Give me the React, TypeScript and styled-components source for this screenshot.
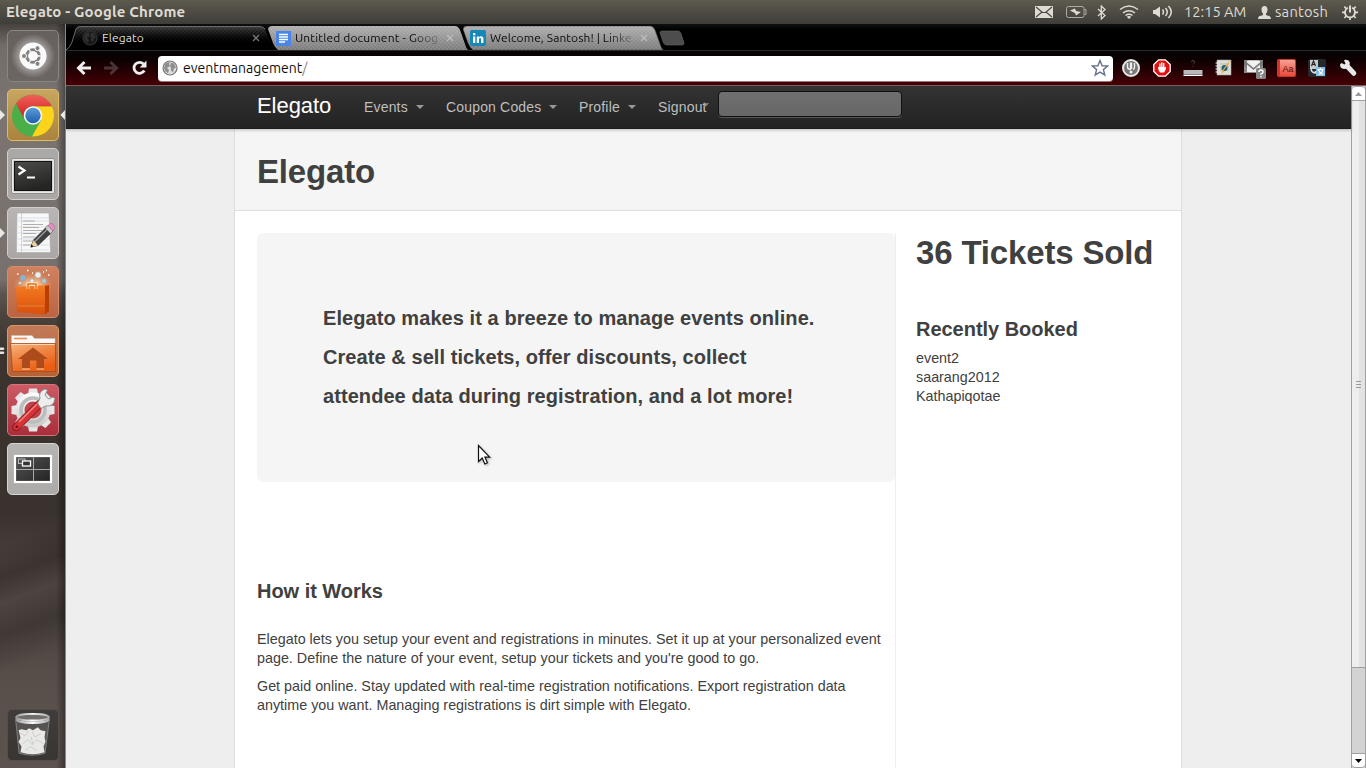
import React from "react";
import styled, { createGlobalStyle, css } from "styled-components";

const sans = `"Liberation Sans", Arial, sans-serif`;
const ui = `Ubuntu, "Noto Sans", "Open Sans", sans-serif`;

const GlobalStyle = createGlobalStyle`
  * { box-sizing: border-box; }
  body { margin: 0; overflow: hidden; background: #eee; }
  h1, h2, h4, p, ul { margin: 0; padding: 0; }
  ul { list-style: none; }
  svg { display: block; flex: none; }
`;

const Desktop = styled.div`
  width: 1366px;
  height: 768px;
  display: flex;
  flex-direction: column;
  overflow: hidden;
  position: relative;
`;

/* ---------- top panel ---------- */
const Panel = styled.header`
  height: 24px;
  flex: none;
  display: flex;
  align-items: center;
  padding: 0 8px 0 6px;
  background: linear-gradient(#5d5a4e, #3e3d38);
  font-family: ${ui};
  color: #dfdbd2;
`;
const PanelTitle = styled.div`
  flex: 1;
  font-size: 15px;
  font-weight: 700;
  letter-spacing: 0.17px;
  line-height: 24px;
  white-space: nowrap;
`;
const Indicator = styled.div<{ $w: number; $gap: number }>`
  width: ${p => p.$w}px;
  margin-left: ${p => p.$gap}px;
`;
const PanelText = styled.span<{ $w: number; $gap: number; $spacing?: number }>`
  width: ${p => p.$w}px;
  margin-left: ${p => p.$gap}px;
  font-size: 14.67px;
  line-height: 24px;
  letter-spacing: ${p => p.$spacing ?? 0}px;
  white-space: nowrap;
`;

const Workspace = styled.div`
  flex: 1;
  display: flex;
  min-height: 0;
`;

/* ---------- launcher ---------- */
const Launcher = styled.nav`
  width: 66px;
  flex: none;
  display: flex;
  flex-direction: column;
  gap: 7px;
  padding: 6px 0 7px;
  border-right: 1px solid #8a8681;
  background:
    linear-gradient(90deg, transparent 56px, rgba(0, 0, 0, 0.35) 65px),
    linear-gradient(160deg, transparent 490px, rgba(25, 18, 15, 0.3) 520px, transparent 545px, rgba(25, 18, 15, 0.28) 575px, transparent 610px),
    linear-gradient(#48413e 0, #736c69 22px, #7b7470 80px, #77706c 255px, #5c544f 270px, #4a423c 292px, #3b332d 330px, #3a322d 440px, #3a322e 490px, #4b423e 540px, #4e4642 600px, #5a504b 670px, #5d534e 744px);
`;
const Slot = styled.div<{ $last?: boolean }>`
  display: flex;
  align-items: center;
  height: 52px;
  margin-top: ${p => (p.$last ? "auto" : 0)};
`;
const Mark = styled.div<{ $right?: boolean }>`
  width: ${p => (p.$right ? 6 : 7)}px;
  flex: none;
`;
const Tile = styled.div<{ $top: string; $bottom: string; $edge: string }>`
  width: 52px;
  height: 52px;
  flex: none;
  border-radius: 5px;
  border: 1px solid ${p => p.$edge};
  background: linear-gradient(${p => p.$top}, ${p => p.$bottom});
  display: flex;
  align-items: center;
  justify-content: center;
`;

/* ---------- browser chrome ---------- */
const Browser = styled.main`
  flex: 1;
  min-width: 0;
  display: flex;
  flex-direction: column;
`;
const TabStrip = styled.div`
  height: 26px;
  flex: none;
  display: flex;
  padding-top: 2px;
  background: linear-gradient(#0e1110, #000 6px);
`;
const TabBox = styled.div<{ $w: number; $pad: number; $active?: boolean }>`
  position: relative;
  width: ${p => p.$w}px;
  height: 24px;
  flex: none;
  display: flex;
  align-items: center;
  padding-left: ${p => p.$pad}px;
  font: 12px ${ui};
  color: ${p => (p.$active ? "#ddd" : "#0a0a0a")};
`;
const TabShape = styled.svg`
  position: absolute;
  left: 0;
  top: 0;
`;
const TabLabel = styled.span<{ $w: number; $spacing: number; $fade?: boolean }>`
  position: relative;
  width: ${p => p.$w}px;
  margin-left: 4px;
  margin-right: 8px;
  overflow: hidden;
  white-space: nowrap;
  line-height: 22px;
  padding-bottom: 1px;
  letter-spacing: ${p => p.$spacing}px;
  ${p => p.$fade && css`mask-image: linear-gradient(90deg, #000 82%, rgba(0, 0, 0, 0.2));`}
`;
const TabIcon = styled.div`
  position: relative;
  flex: none;
`;
const Toolbar = styled.div`
  height: 36px;
  flex: none;
  display: flex;
  align-items: center;
  padding-left: 9px;
  border-top: 1px solid #2c2c2c;
  border-bottom: 1px solid #7c6263;
  background: linear-gradient(#050505 0, #0b0001 8px, #2a0003 22px, #480006 34px);
`;
const NavButton = styled.div<{ $dim?: boolean }>`
  width: 28px;
  height: 34px;
  padding: 0 6px 0 0;
  flex: none;
  display: flex;
  align-items: center;
  opacity: ${p => (p.$dim ? 0.25 : 1)};
`;
const Omnibox = styled.div`
  width: 955px;
  height: 25px;
  margin: 0 2px 0 -1px;
  flex: none;
  display: flex;
  align-items: center;
  justify-content: space-between;
  padding: 0 4px;
  border-radius: 4px;
  background: #fff;
  box-shadow: 0 1px 0 #a07578;
`;
const Address = styled.div`
  display: flex;
  align-items: center;
  gap: 5px;
  font: 14px ${ui};
  line-height: 24px;
  color: #111;
`;
const Slash = styled.span`
  color: #888;
  margin-left: -5px;
`;
const Extension = styled.div`
  width: 31.1px;
  flex: none;
  display: flex;
  justify-content: center;
`;

/* ---------- page ---------- */
const Viewport = styled.div`
  flex: 1;
  min-height: 0;
  display: flex;
`;
const Page = styled.div`
  flex: 1;
  display: flex;
  flex-direction: column;
  background: #eee;
  font-family: ${sans};
  color: #404040;
`;
const NavBar = styled.div`
  height: 43px;
  flex: none;
  display: flex;
  padding-left: 191px;
  background: linear-gradient(#333, #222);
  box-shadow: 0 1px 3px rgba(0, 0, 0, 0.25), inset 0 -1px 0 rgba(0, 0, 0, 0.15);
  position: relative;
  color: #bfbfbf;
`;
const Brand = styled.a`
  width: 107px;
  font-size: 22px;
  line-height: 39px;
  letter-spacing: -0.05px;
  color: #fff;
`;
const NavItem = styled.a<{ $w: number }>`
  width: ${p => p.$w}px;
  display: flex;
  align-items: center;
  justify-content: space-between;
  margin-right: 22px;
  font-size: 14px;
  letter-spacing: 0.17px;
  line-height: 42px;
  height: 42px;
  white-space: nowrap;
`;
const Caret = styled.i<{ $tucked?: boolean }>`
  border: 4px solid transparent;
  border-top-color: #999;
  border-bottom: 0;
  ${p => p.$tucked && css`margin-left: -5px; margin-top: -4px; border-width: 4px 3px 0; opacity: 0.7;`}
`;
const SearchBox = styled.input`
  width: 184px;
  height: 26px;
  margin: 5px 0 0 -13px;
  padding: 0;
  border: 1px solid #111;
  border-radius: 4px;
  background: linear-gradient(#707070, #666);
  box-shadow: 0 1px 0 #555;
  outline: 0;
`;
const Content = styled.div`
  width: 948px;
  flex: 1;
  margin-left: 168px;
  display: flex;
  flex-direction: column;
  border: solid #ddd;
  border-width: 0 1px;
  background: #fff;
`;
const PageHeader = styled.div`
  height: 82px;
  padding: 23px 22px 0;
  background: #f5f5f5;
  border-bottom: 1px solid #ddd;
`;
const Title = styled.h1`
  font-size: 33px;
  line-height: 40px;
  letter-spacing: -0.16px;
  white-space: nowrap;
`;
const Columns = styled.div`
  flex: 1;
  display: flex;
  padding: 22px 0 0 22px;
`;
const MainColumn = styled.div`
  width: 639px;
  border-right: 1px solid #eee;
`;
const SideColumn = styled.aside`
  padding-left: 20px;
  font-size: 14.33px;
  line-height: 19px;
`;
const Hero = styled.div`
  width: 638px;
  height: 249px;
  padding: 66px 0 0 66px;
  border-radius: 6px;
  background: #f5f5f5;
`;
const HeroLine = styled.p`
  font-size: 20px;
  font-weight: 700;
  line-height: 39px;
  letter-spacing: 0.07px;
  white-space: nowrap;
`;
const Heading = styled.h4<{ $top: number; $bottom: number }>`
  font-size: 20px;
  line-height: 24px;
  letter-spacing: -0.03px;
  margin: ${p => p.$top}px 0 ${p => p.$bottom}px;
`;
const Paragraph = styled.p`
  font-size: 14.33px;
  line-height: 19px;
  margin-bottom: 9px;
  white-space: nowrap;
`;

/* ---------- scrollbar ---------- */
const ScrollBar = styled.div`
  width: 15px;
  flex: none;
  display: flex;
  flex-direction: column;
  border: solid #a0a0a0;
  border-width: 0 1px;
  background: #d3d3d3;
`;
const ScrollButton = styled.div<{ $end?: boolean }>`
  height: 15px;
  display: flex;
  align-items: center;
  justify-content: center;
  background: #fff;
  border: solid #a0a0a0;
  border-width: 1px 0;
  border-radius: ${p => (p.$end ? "0 0 4px 4px" : "4px 4px 0 0")};
`;
const Thumb = styled.div`
  height: 567px;
  display: flex;
  flex-direction: column;
  align-items: center;
  justify-content: center;
  gap: 2px;
  border-bottom: 1px solid #a0a0a0;
  background: linear-gradient(90deg, #eee 7px, #e2e2e2 7px);
`;
const Grip = styled.i`
  width: 5px;
  height: 1px;
  background: #999;
`;
const Trough = styled.div`
  flex: 1;
`;

const Pointer = styled.svg`
  position: absolute;
  left: 477px;
  top: 444px;
  filter: drop-shadow(1px 1px 1px rgba(0, 0, 0, 0.3));
`;

/* ---------- drawings ---------- */
const LeftPip = () => (
  <svg width="6" height="12" viewBox="0 0 6 12"><path d="M0 1 5 6 0 11Z" fill="#e8e8e8" /></svg>
);
const RightPip = () => (
  <svg width="6" height="12" viewBox="0 0 6 12"><path d="M6 1 1.500 6 6 11Z" fill="#eee" /></svg>
);
const PairPip = () => (
  <svg width="6" height="12" viewBox="0 0 6 12"><path d="M0 2.500h3.500l1 1-1 1.500H0zM0 6.500h3.500l1 1.200-1 1.300H0z" fill="#e4e4e4" /></svg>
);

const UbuntuLogo = () => (
  <svg width="50" height="50" viewBox="0 0 50 50">
    <defs><radialGradient id="halo"><stop offset=".5" stopColor="#fff" stopOpacity=".45" /><stop offset="1" stopColor="#fff" stopOpacity="0" /></radialGradient></defs>
    <circle cx="25" cy="25" r="22" fill="url(#halo)" />
    <circle cx="25" cy="25" r="13.500" fill="#fafafa" />
    <circle cx="25" cy="25" r="6.300" fill="none" stroke="#858180" strokeWidth="3" />
    <g stroke="#fafafa" strokeWidth="1.300"><path d="M25 25h10M25 25l-5-8.700M25 25l-5 8.700" /></g>
    <circle cx="25" cy="25" r="4.600" fill="#fafafa" />
    <g fill="#858180" stroke="#fafafa" strokeWidth="1"><circle cx="16" cy="25" r="2.500" /><circle cx="29.500" cy="17.200" r="2.500" /><circle cx="29.500" cy="32.800" r="2.500" /></g>
  </svg>
);
const ChromeLogo = () => (
  <svg width="50" height="50" viewBox="0 0 50 50">
    <defs>
      <linearGradient id="cr" x2="0" y2="1"><stop stopColor="#f0605a" /><stop offset="1" stopColor="#d01f1f" /></linearGradient>
      <linearGradient id="cb" x2="0" y2="1"><stop stopColor="#5b9bd8" /><stop offset="1" stopColor="#1f5fae" /></linearGradient>
    </defs>
    <circle cx="25" cy="25.500" r="21" fill="#4aaf48" />
    <path d="M25 16.200h18.800A21 21 0 0 1 24 46.500L33.300 30Z" fill="#fdd31b" />
    <path d="M8 13.500A21 21 0 0 1 43.900 16.200H25a9.500 9.500 0 0 0-9 12.300Z" fill="url(#cr)" />
    <circle cx="25" cy="25.500" r="9.300" fill="#f2f6f8" />
    <circle cx="25" cy="25.500" r="7.700" fill="url(#cb)" />
  </svg>
);
const TerminalIcon = () => (
  <svg width="50" height="50" viewBox="0 0 50 50">
    <defs><linearGradient id="term" x2="0.300" y2="1"><stop stopColor="#4c4c4a" /><stop offset="1" stopColor="#252524" /></linearGradient></defs>
    <rect x="3.500" y="9.500" width="43" height="35" rx="1.500" fill="#e9e9e9" stroke="#8f8f8f" />
    <rect x="5.500" y="11.500" width="39" height="31" fill="#bbb" />
    <rect x="6.500" y="12.500" width="37" height="29" fill="url(#term)" stroke="#111" />
    <path d="m10.500 17.500 6 4-6 4" fill="none" stroke="#fff" strokeWidth="2.200" />
    <path d="M19 28.500h8" stroke="#fff" strokeWidth="2" />
  </svg>
);
const EditorIcon = () => (
  <svg width="50" height="50" viewBox="0 0 50 50">
    <path d="M9 5h32l1.500 39.500H8.500Z" fill="#f8f8f6" stroke="#aaa" strokeWidth=".6" />
    <path d="M10 10h31M10 13h31M10 19h31M10 25h31M10 31h31M10 37h31M10 42h31" stroke="#ccd8ec" strokeWidth=".7" />
    <path d="M13.500 5v39" stroke="#f0b8c0" strokeWidth=".8" />
    <path d="M15 13h12M15 16.500h20M15 19.500h16M15 22.500h19M15 25.500h13M15 29h12M15 33h11M15 37h9" stroke="#a6a6a6" strokeWidth=".9" />
    <path d="m23 39 2.500-7L40 17.500l5 5.500-15 14.500Z" fill="#3d3f41" stroke="#222" strokeWidth=".7" />
    <path d="m27 33.500 14-14" stroke="#9a9da0" strokeWidth="1.500" />
    <path d="m37.500 20 2.500-2.500 5 5.500-2.500 2.500Z" fill="#ccc" />
    <path d="m40 17.500 2-1.800q1.500-1 3.500 1t1 4L45 23Z" fill="#e58fc0" stroke="#9c6486" strokeWidth=".5" />
    <path d="m23 39 2.500-7 4.500 5.500Z" fill="#ead39b" /><path d="m22.500 39.500 1-3 2 2Z" fill="#111" />
  </svg>
);
const SoftwareIcon = () => (
  <svg width="50" height="50" viewBox="0 0 50 50">
    <defs><linearGradient id="bag" x2="0" y2="1"><stop stopColor="#f47c21" /><stop offset="1" stopColor="#d94f0b" /></linearGradient>
      <radialGradient id="burst"><stop stopColor="#fff6c0" /><stop offset="1" stopColor="#f6b070" stopOpacity="0" /></radialGradient></defs>
    <ellipse cx="25" cy="18" rx="20" ry="12" fill="url(#burst)" />
    <g fill="#f2ece6" stroke="#a8a09c" strokeWidth=".8"><circle cx="15" cy="11" r="3" fill="#86b5d6" /><circle cx="30" cy="8" r="3.200" /><circle cx="24" cy="14" r="2.300" /><circle cx="36" cy="14" r="2.500" fill="#b9c8d0" /><circle cx="12" cy="16" r="1.500" /></g>
    <path d="M19 3.500h1.500M24 6h1M40 8h1.500M38 3.500h1M9 7h1.500M35 5h1" stroke="#fff" strokeWidth="1.500" />
    <path d="M8 20 41 18v26l-4 3.500L9 45Z" fill="url(#bag)" />
    <path d="m37 19 4-1v26l-4 3.500Z" fill="#b93f05" />
    <path d="M20 22v-5h8v5" fill="none" stroke="#fff3dd" strokeWidth="2.800" /><path d="M20 22v-5h8v5" fill="none" stroke="#e96a12" strokeWidth="1.500" />
    <path d="M10 39h26" stroke="#e98a50" strokeWidth=".8" />
  </svg>
);
const FilesIcon = () => (
  <svg width="50" height="50" viewBox="0 0 50 50">
    <defs><linearGradient id="fold" x2=".5" y2="1"><stop stopColor="#f6b680" /><stop offset=".5" stopColor="#f08544" /><stop offset="1" stopColor="#ea5e12" /></linearGradient></defs>
    <path d="M3.500 20V9.500h20.500l2.500 3H47V20Z" fill="#fafafa" stroke="#c8c0b8" strokeWidth=".6" />
    <path d="M6 12.500h13" stroke="#f08a4e" strokeWidth="1.600" />
    <path d="M2.500 17.500h45v28h-43Z" fill="url(#fold)" stroke="#a8481b" strokeWidth=".8" />
    <path d="M3.500 18.500h43" stroke="#fbd5b0" />
    <path d="M25 21.500 40 33h-4v9.500H28.500v-8h-6.500v8h-8V33h-4Z" fill="#ad4b1b" />
    <path d="M14 43h8M28.500 43H36" stroke="#ffd7a8" />
  </svg>
);
const SettingsIcon = () => (
  <svg width="50" height="50" viewBox="0 0 50 50">
    <defs><linearGradient id="gear" x2="0" y2="1"><stop stopColor="#fff" /><stop offset="1" stopColor="#c8c8c8" /></linearGradient></defs>
    <g fill="#e6e6e6">
      {[0, 45, 90, 135].map(a => <path key={a} transform={`rotate(${a} 25 25)`} d="M21 3.500h8l1.500 8v27l-1.500 8h-8l-1.500-8v-27Z" />)}
      <circle cx="25" cy="25" r="17.500" fill="url(#gear)" />
    </g>
    <circle cx="25" cy="25" r="12" fill="none" stroke="#bcbcbc" strokeWidth="3.500" />
    <circle cx="25" cy="25" r="8.500" fill="#c1434b" />
    <path d="M8.500 42 31 19.500" stroke="#7d1217" strokeWidth="8" strokeLinecap="round" />
    <path d="M8.500 42 31 19.500" stroke="#d93236" strokeWidth="6.500" strokeLinecap="round" />
    <path d="m11 37 18-18" stroke="#f28a84" strokeWidth="1.500" />
    <circle cx="8.800" cy="41.800" r="1.300" fill="#651015" />
    <path d="m29.500 18 2.500-4.500q-2-7 5-9.500l2.500 1-2.500 5 3.500 4 4.500-2 2 1.500q-1 8.500-9.500 7.500l-4.500 2.500Z" fill="#eee" stroke="#888" strokeWidth=".9" />
  </svg>
);
const WorkspacesIcon = () => (
  <svg width="50" height="50" viewBox="0 0 50 50">
    <defs><linearGradient id="ws" x2="1" y2="1"><stop stopColor="#565656" /><stop offset="1" stopColor="#222" /></linearGradient></defs>
    <rect x="7" y="12" width="36" height="26" fill="url(#ws)" stroke="#fff" strokeWidth="2.200" />
    <path d="M25.500 13v24M8 25.500h34" stroke="#a8a8a8" />
    <rect x="10.500" y="15" width="6.500" height="4.500" fill="none" stroke="#bbb" />
    <rect x="14.500" y="17" width="8" height="5" fill="#333" stroke="#fff" strokeWidth="1.300" />
  </svg>
);
const TrashIcon = () => (
  <svg width="50" height="50" viewBox="0 0 52 52">
    <defs><linearGradient id="rim"><stop stopColor="#999" /><stop offset=".5" stopColor="#fff" /><stop offset="1" stopColor="#aaa" /></linearGradient></defs>
    <path d="M8 10 11.500 45q14 4 27 0L43 10Z" fill="#5d5a58" fillOpacity=".8" stroke="#999" strokeWidth=".7" />
    <path d="m11 21 3-1 5 1 3-2 4 2 5-3 3 3 5 1-1 6 1 5-2 5 1 6q-12 4-25 0l1-6-3-5 2-4-1-4Z" fill="#e8e8e6" />
    <path d="m13 24 5 3 3-5M25 22l3 6 6-3M15 35l6-4 4 5 5-5 7 4M18 42l5-4 7 4M24 28l2 8" stroke="#cdcdcb" fill="none" />
    <ellipse cx="25.500" cy="7.500" rx="17" ry="3.500" fill="#716d6a" stroke="url(#rim)" strokeWidth="2" />
    <path d="M8 8q1 4 17.500 4T43 8v3q-2 3.500-17.500 3.500T8 11Z" fill="url(#rim)" />
  </svg>
);

const Globe = ({ dark }: { dark?: boolean }) => (
  <svg width="16" height="16" viewBox="0 0 16 16">
    <circle cx="8" cy="8" r="7" fill={dark ? "#151515" : "#dcdcdc"} stroke={dark ? "#343434" : "#777"} strokeWidth="1.200" />
    <path d="M3 4q2-2 5-2L7 4l1 2-3 2 2 2-1 3q-3-1-4-5ZM9 2.500l3 1 2 4-2 1-1 4-2-2V8L8 6Z" fill={dark ? "#2f2f2f" : "#8f8f8f"} />
  </svg>
);
const DocIcon = () => (
  <svg width="15" height="15" viewBox="0 0 15 15"><path fill="#4a86e8" d="M0 0h15v15H0z" /><path d="M3 3.500h9M3 6h9M3 8.500h9M3 11h6" stroke="#fff" strokeWidth="1.300" /></svg>
);
const LinkedInIcon = () => (
  <svg width="16" height="16" viewBox="0 0 16 16"><rect width="16" height="16" rx="2" fill="#1488b8" /><path d="M3 6.500h2.300V13H3zM3 3h2.300v2.200H3zM6.800 6.500H9v1q.7-1.200 2.100-1.200Q13.400 6.300 13.400 9v4h-2.300V9.400q0-1.300-1-1.300T9 9.400V13H6.800z" fill="#fff" /></svg>
);
const CloseX = ({ color }: { color: string }) => (
  <svg width="8" height="8" viewBox="0 0 8 8"><path d="m1 1 6 6M7 1 1 7" stroke={color} strokeWidth="1.300" /></svg>
);

const TabPattern = () => (
  <defs>
    <linearGradient id="tabOff" x2="0" y2="1"><stop stopColor="#b0b0b0" /><stop offset="1" stopColor="#7c7c7c" /></linearGradient>
    <linearGradient id="tabOn" x2="0" y2="1"><stop stopColor="#3a3a3a" /><stop offset=".55" stopColor="#111" /><stop offset="1" stopColor="#000" /></linearGradient>
    <linearGradient id="sink" x2="0" y2="1"><stop stopColor="#000" stopOpacity="0" /><stop offset=".7" stopColor="#000" /></linearGradient>
    <pattern id="weave" width="4" height="4" patternUnits="userSpaceOnUse"><path d="M0 0h2v2H0zM2 2h2v2H2z" fill="#fff" fillOpacity=".07" /></pattern>
  </defs>
);

const DictionaryTile = styled.div`
  width: 19px;
  height: 18px;
  padding: 3px 0 0 3px;
  border-radius: 2px;
  border: 1px solid #d3352a;
  border-left-width: 3px;
  background: linear-gradient(#f7a194, #e8493c);
  color: #55100c;
  font: 9px/13px ${sans};
`;
const Extensions = () => (
  <>
    <Extension><svg width="20" height="20" viewBox="0 0 20 20"><circle cx="10" cy="10" r="8" fill="#777" stroke="#e8e8e8" strokeWidth="2" /><path d="M6.500 5v4q0 2.500 3.500 2.500M13.500 5v4q0 2-1.500 2.500" stroke="#eee" strokeWidth="1.400" fill="none" /><path d="M10 4.500V11" stroke="#eee" strokeWidth="2.400" /><circle cx="10" cy="14" r="1.500" fill="#eee" /></svg></Extension>
    <Extension><svg width="18" height="18" viewBox="0 0 18 18"><path d="M5.600.8h6.800l4.800 4.800v6.800l-4.800 4.800H5.600L.8 12.400V5.600Z" fill="#e01010" stroke="#fff" strokeWidth="1.300" /><path d="M5 8h1.300V4.500h1.300V8h.6V3.300h1.300V8h.6V4h1.300v4.500l1.600-1v2.500L11 13.500H7Q5 12 5 8Z" fill="#fff" /></svg></Extension>
    <Extension><svg width="20" height="20" viewBox="0 0 20 20"><path d="M8.500 4q0-1.500 1.500-1.500T11.500 4 10 6.500M10 8v1" stroke="#444" fill="none" /><path d="M.5 12h19v4H.5z" fill="#b9b9bd" /><path d="M.5 16.500h19v1.500H.5z" fill="#fff" /></svg></Extension>
    <Extension><svg width="18" height="18" viewBox="0 0 18 18"><path d="M2 1h14v15H2z" fill="#deded6" stroke="#aaa" strokeWidth=".6" /><path d="M.5 4h3M.5 7h3M.5 10h3M.5 13h3" stroke="#eee" strokeWidth="1" /><path d="M5 5h9M5 8h9M5 11h9" stroke="#aaa" strokeWidth=".7" /><path d="m15 1-5 7-4 8 6-7Z" fill="#e8a62c" /><circle cx="9.500" cy="9" r="3" fill="#215d78" /><path d="m7 13 7-10" stroke="#f3b83f" strokeWidth="1.200" /></svg></Extension>
    <Extension><svg width="22" height="22" viewBox="0 0 22 22"><path d="M0 3h19v13H0z" fill="#8b8b8b" /><path d="M3 4h13v11H3z" fill="#eee" /><path d="m0 3 9.500 8L19 3v5l-3 2.500V7.500L9.500 13 3 7.500v3L0 8Z" fill="#777" /><path d="m3.500 3.500 6 5 6-5Z" fill="#f4f4f4" /><rect x="12" y="11" width="10" height="11" rx="1.500" fill="#858585" /><path d="M15 15q0-2 2-2t2 1.800-2 2.200v.8M17 19v1.300" stroke="#fff" strokeWidth="1.500" fill="none" /></svg></Extension>
    <Extension><DictionaryTile>Aa</DictionaryTile></Extension>
    <Extension><svg width="18" height="18" viewBox="0 0 18 18"><rect width="18" height="18" rx="2" fill="#24292c" /><path d="M2 1h8v9H2z" fill="#c9c9c9" /><path d="m3.500 7 2-5 2 5M4.500 5.500h2" stroke="#222" strokeWidth="1.200" fill="none" /><path d="M3 9q0 5 5 5l-1-2" stroke="#ddd" strokeWidth="1.500" fill="none" /><path d="M8 8h9v9H8z" fill="#84bce6" /><path d="M9.500 10.500h6M12.500 9v1.500M10.500 15.500q4-1 4-5M10.500 11q1 3 4.500 4.500" stroke="#fff" strokeWidth="1.100" fill="none" /></svg></Extension>
    <Extension><svg width="18" height="18" viewBox="0 0 18 18"><path d="M1 5.500 2.500 4l3 1.500 1-1L5 1.500 6 .8q4-.5 4.800 3.200l-.2 2L17 13q1 1.500-.5 3t-3 .5L7 9.800 5 10Q1 9.500 1 5.500Z" fill="#e8e8e8" /></svg></Extension>
  </>
);

const PanelIndicators = () => (
  <>
    <Indicator $w={18} $gap={0}><svg width="18" height="12" viewBox="0 0 18 12"><path d="M0 0h18v12H0z" fill="#dfdbd2" /><path d="m1 1 6.500 5.500h3L17 1M1 11l6-5M17 11l-6-5" stroke="#4a4942" strokeWidth="1.200" fill="none" /></svg></Indicator>
    <Indicator $w={21} $gap={13}><svg width="21" height="12" viewBox="0 0 21 12"><rect x=".5" y=".5" width="17.500" height="11" rx="2" fill="none" stroke="#aeaba2" /><path d="M18.500 3.500h1.500v5h-1.500" fill="none" stroke="#aeaba2" /><path d="m4 4.500 5-2 1 2.500 5 1-5 3.500L9 7Z" fill="#dfdbd2" /></svg></Indicator>
    <Indicator $w={9} $gap={10}><svg width="9" height="15" viewBox="0 0 9 15"><path d="m1 4 7 6.500-3.700 3.500V1L8 4.500 1 11" fill="none" stroke="#dfdbd2" strokeWidth="1.300" /></svg></Indicator>
    <Indicator $w={20} $gap={13}><svg width="20" height="14" viewBox="0 0 20 14"><path d="M1 4.500q9-7 18 0M4 8q6-4.500 12 0M6.500 10.500q3.500-2.500 7 0" fill="none" stroke="#dfdbd2" strokeWidth="1.500" /><path d="m10 14-2.300-2.300q2.300-1.500 4.600 0Z" fill="#dfdbd2" /></svg></Indicator>
    <Indicator $w={20} $gap={14}><svg width="20" height="14" viewBox="0 0 20 14"><path d="M0 5h2l5-3.500v11L2 9H0Z" fill="#dfdbd2" /><path d="M9.500 4.500q2 2.500 0 5M12.500 3q3.500 4 0 8M15.500 1q5.500 6 0 12" fill="none" stroke="#dfdbd2" strokeWidth="1.500" /></svg></Indicator>
    <PanelText $w={63} $gap={11}>12:15 AM</PanelText>
    <Indicator $w={13} $gap={11}><svg width="13" height="13" viewBox="0 0 13 13"><path d="M6.500 0q3 0 3 3.500T7.800 8q0 1.500 2.500 1.800T13 13H0q0-2.800 2.700-3.200T5.200 8Q3.500 7 3.500 3.500T6.500 0Z" fill="#dfdbd2" /></svg></Indicator>
    <PanelText $w={55} $gap={4} $spacing={0.25}>santosh</PanelText>
    <Indicator $w={16} $gap={12}><svg width="16" height="16" viewBox="0 0 16 16"><path d="M6 3.800a5 5 0 1 0 4 0" fill="none" stroke="#dfdbd2" strokeWidth="1.800" /><path d="M8 1.500V8.500" stroke="#dfdbd2" strokeWidth="2" /><path d="M0 8.300h3M13 8.300h3M2.300 2.600l2 2M13.700 2.600l-2 2M2.300 14l2-2M13.700 14l-2-2M8 13V16" stroke="#dfdbd2" strokeWidth="1.700" /></svg></Indicator>
  </>
);

type LauncherApp = { icon: React.ReactNode; top: string; bottom: string; edge: string; left?: React.ReactNode; right?: boolean; last?: boolean };
const apps: LauncherApp[] = [
  { icon: <UbuntuLogo />, top: "#67615e", bottom: "#6c6663", edge: "#8b8583" },
  { icon: <ChromeLogo />, top: "#c7a661", bottom: "#aa843d", edge: "#dfba68", left: <LeftPip />, right: true },
  { icon: <TerminalIcon />, top: "#aaa9a8", bottom: "#aaa7a5", edge: "#d2d0ce" },
  { icon: <EditorIcon />, top: "#b8b5b4", bottom: "#aaa6a5", edge: "#cfcccb", left: <LeftPip /> },
  { icon: <SoftwareIcon />, top: "#cf8260", bottom: "#b96543", edge: "#d88b68" },
  { icon: <FilesIcon />, top: "#c27b57", bottom: "#b56237", edge: "#dc9764", left: <PairPip /> },
  { icon: <SettingsIcon />, top: "#cb5b65", bottom: "#a92e3a", edge: "#d7737d" },
  { icon: <WorkspacesIcon />, top: "#b5b4b3", bottom: "#acabaa", edge: "#d6d5d4" },
  { icon: <TrashIcon />, top: "#403c3b", bottom: "#393533", edge: "#514d4b", last: true },
];

const activeTab = "M0 24Q4 22 6 16L10 3Q11 .5 14 .5H194Q197 .5 199 3L204 16Q206 22 209 24Z";
const idleTab = "M0 3Q1 0 4 0H187Q190 0 192 4L197 18Q198 22 200 24H10Q7 22 5 17Z";

export default function ElegatoDesktop() {
  return (
    <Desktop>
      <GlobalStyle />
      <Panel>
        <PanelTitle>Elegato - Google Chrome</PanelTitle>
        <PanelIndicators />
      </Panel>
      <Workspace>
        <Launcher>
          {apps.map((a, i) => (
            <Slot key={i} $last={a.last}>
              <Mark>{a.left}</Mark>
              <Tile $top={a.top} $bottom={a.bottom} $edge={a.edge}>{a.icon}</Tile>
              <Mark $right>{a.right && <RightPip />}</Mark>
            </Slot>
          ))}
        </Launcher>
        <Browser>
          <TabStrip>
            <TabBox $w={202} $pad={16} $active>
              <TabShape width="210" height="24"><TabPattern />
                <path d={activeTab} fill="url(#tabOn)" />
                <path d={activeTab} fill="url(#weave)" />
                <path d={activeTab} fill="url(#sink)" />
                <path d="M0 24Q4 22 6 16L10 3Q11 .5 14 .5H194Q197 .5 199 3" fill="none" stroke="#686868" />
              </TabShape>
              <TabIcon><Globe dark /></TabIcon>
              <TabLabel $w={142} $spacing={0.08}>Elegato</TabLabel>
              <TabIcon><CloseX color="#777" /></TabIcon>
            </TabBox>
            <TabBox $w={195} $pad={8}>
              <TabShape width="200" height="24">
                <path d={idleTab} fill="url(#tabOff)" />
                <path d={idleTab} fill="url(#weave)" />
              </TabShape>
              <TabIcon><DocIcon /></TabIcon>
              <TabLabel $w={143} $spacing={0.15} $fade>Untitled document - Goog</TabLabel>
              <TabIcon><CloseX color="#bdbdbd" /></TabIcon>
            </TabBox>
            <TabBox $w={196} $pad={7}>
              <TabShape width="200" height="24">
                <path d={idleTab} fill="url(#tabOff)" stroke="#4a4a4a" strokeWidth=".6" />
                <path d={idleTab} fill="url(#weave)" />
              </TabShape>
              <TabIcon><LinkedInIcon /></TabIcon>
              <TabLabel $w={142} $spacing={0.09} $fade>Welcome, Santosh! | Linke</TabLabel>
              <TabIcon><CloseX color="#bdbdbd" /></TabIcon>
            </TabBox>
            <svg width="26" height="24"><path d="M1 7Q1 5 3 5H19Q21 5 22 7.500L25 17Q25 19 23 19H8Q5.500 19 4.500 17Z" fill="#4d4d4d" stroke="#666" strokeWidth=".6" /></svg>
          </TabStrip>
          <Toolbar>
            <NavButton><svg width="18" height="18" viewBox="0 0 18 18"><path d="M16 9H4M9.500 3 3.500 9l6 6" stroke="#eee" strokeWidth="3" fill="none" /></svg></NavButton>
            <NavButton $dim><svg width="18" height="18" viewBox="0 0 18 18"><path d="M1 9h11M7.500 3l6 6-6 6" stroke="#ccc" strokeWidth="3" fill="none" /></svg></NavButton>
            <NavButton><svg width="18" height="18" viewBox="0 0 18 18"><path d="M13.300 11.500A5.500 5.500 0 1 1 12.500 5" stroke="#eee" strokeWidth="2.800" fill="none" /><path d="M15.500 1.500V8.500H8.700Z" fill="#eee" /></svg></NavButton>
            <Omnibox>
              <Address><Globe /><span>eventmanagement</span><Slash>/</Slash></Address>
              <svg width="18" height="18" viewBox="0 0 18 18"><path d="m9 1.500 2.100 5.200 5.600.3-4.300 3.600 1.400 5.500L9 13.100l-4.800 3 1.400-5.500L1.300 7l5.600-.3Z" fill="#fff" stroke="#66708a" strokeWidth="1.400" /></svg>
            </Omnibox>
            <Extensions />
          </Toolbar>
          <Viewport>
            <Page>
              <NavBar>
                <Brand>Elegato</Brand>
                <NavItem $w={60}>Events<Caret /></NavItem>
                <NavItem $w={111}>Coupon Codes<Caret /></NavItem>
                <NavItem $w={57}>Profile<Caret /></NavItem>
                <NavItem $w={51}>Signout<Caret $tucked /></NavItem>
                <SearchBox aria-label="Search" />
              </NavBar>
              <Content>
                <PageHeader><Title>Elegato</Title></PageHeader>
                <Columns>
                  <MainColumn>
                    <Hero>
                      <HeroLine>Elegato makes it a breeze to manage events online.</HeroLine>
                      <HeroLine>Create &amp; sell tickets, offer discounts, collect</HeroLine>
                      <HeroLine>attendee data during registration, and a lot more!</HeroLine>
                    </Hero>
                    <Heading $top={97} $bottom={27}>How it Works</Heading>
                    <Paragraph>Elegato lets you setup your event and registrations in minutes. Set it up at your personalized event<br />page. Define the nature of your event, setup your tickets and you're good to go.</Paragraph>
                    <Paragraph>Get paid online. Stay updated with real-time registration notifications. Export registration data<br />anytime you want. Managing registrations is dirt simple with Elegato.</Paragraph>
                  </MainColumn>
                  <SideColumn>
                    <Title>36 Tickets Sold</Title>
                    <Heading $top={44} $bottom={8}>Recently Booked</Heading>
                    <ul><li>event2</li><li>saarang2012</li><li>Kathapiqotae</li></ul>
                  </SideColumn>
                </Columns>
              </Content>
            </Page>
            <ScrollBar>
              <ScrollButton><svg width="7" height="4"><path d="M0 4 3.500 0 7 4Z" fill="#999" /></svg></ScrollButton>
              <Thumb><Grip /><Grip /><Grip /></Thumb>
              <Trough />
              <ScrollButton $end><svg width="7" height="4"><path d="M0 0h7L3.500 4Z" fill="#000" /></svg></ScrollButton>
            </ScrollBar>
          </Viewport>
        </Browser>
      </Workspace>
      <Pointer width="14" height="24" viewBox="0 0 14 24"><path d="M1.500 1.500v16l3.700-3.500 2.600 6 2.600-1.200-2.500-5.600h4.800Z" fill="#fff" stroke="#111" strokeWidth="1.200" /></Pointer>
    </Desktop>
  );
}
